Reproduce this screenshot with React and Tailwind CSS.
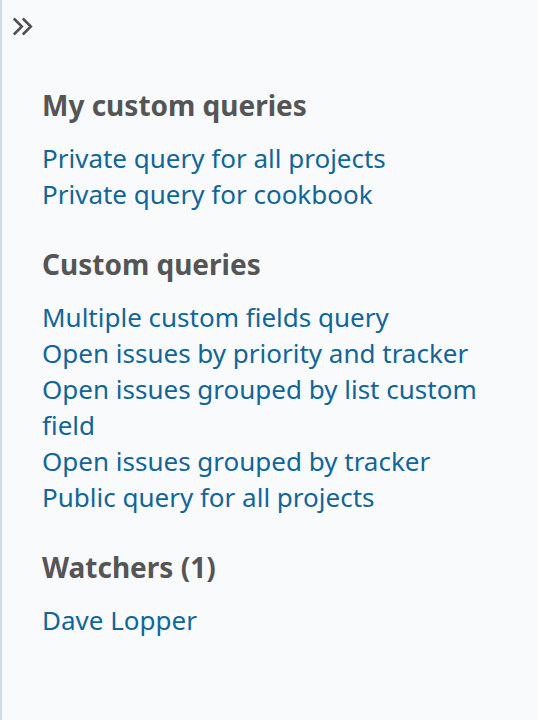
export default function App() {
  const Section = ({ title, links, first }) => (
    <div className={first ? "" : "mt-[34px]"}>
      <h3 className="text-[28px] font-bold text-[#555555] leading-[36px]">{title}</h3>
      <ul className="mt-[17px]">
        {links.map((l) => (
          <li key={l} className="text-[26px] leading-[36px]">
            <a href="#" className="text-[#116699]">{l}</a>
          </li>
        ))}
      </ul>
    </div>
  );
  return (
    <div
      className="w-[538px] h-[720px] bg-[#f9fafb] border-l-[2px] border-[#d3dae4] overflow-hidden"
      style={{ fontFamily: '"Noto Sans", sans-serif' }}
    >
      <div className="pl-[10px] pt-[17px]">
        <svg className="block" width="24" height="20" viewBox="0 0 24 20" fill="none" stroke="#505050" strokeWidth="2.6" strokeLinecap="butt" strokeLinejoin="miter">
          <path d="M1.8 1.5 L9.8 9.5 L1.8 17.5" />
          <path d="M10.8 1.5 L18.8 9.5 L10.8 17.5" />
        </svg>
      </div>
      <div className="pl-[40px] pr-[24px] pt-[50px]">
        <Section first title="My custom queries" links={["Private query for all projects", "Private query for cookbook"]} />
        <Section title="Custom queries" links={["Multiple custom fields query", "Open issues by priority and tracker", "Open issues grouped by list custom field", "Open issues grouped by tracker", "Public query for all projects"]} />
        <Section title="Watchers (1)" links={["Dave Lopper"]} />
      </div>
    </div>
  );
}
